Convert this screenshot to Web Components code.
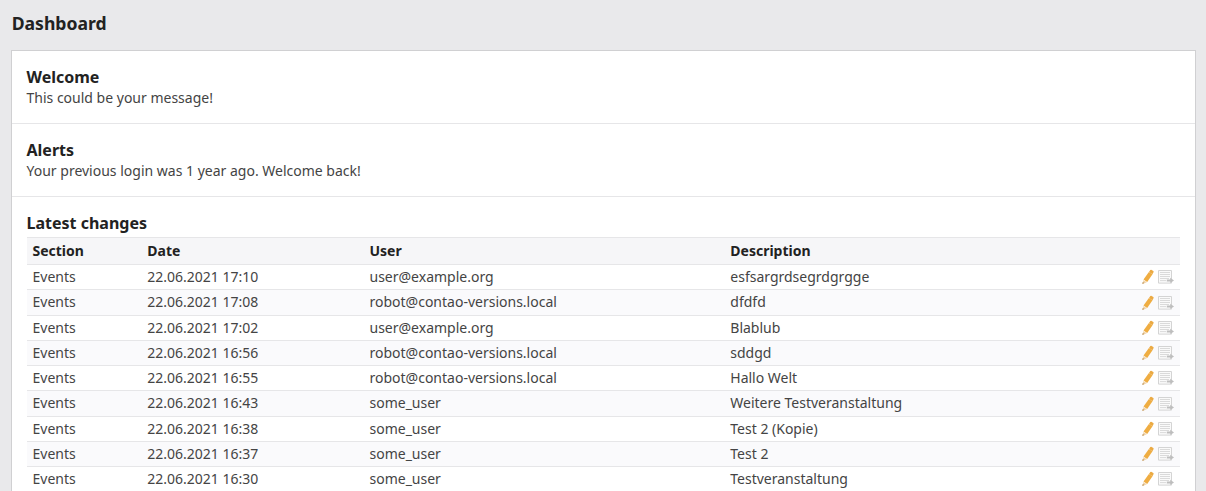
<!DOCTYPE html>
<html lang="en"><head><meta charset="utf-8"><title>Dashboard</title>
<style>
html,body{margin:0;height:100%;overflow:hidden;background:#e9e9eb}
body{font:14px/1.4 "Noto Sans",sans-serif;color:#444}
</style></head><body>
<dash-page heading="Dashboard">
<dash-section heading="Welcome">This could be your message!</dash-section>
<dash-section heading="Alerts">Your previous login was 1 year ago. Welcome back!</dash-section>
<dash-section heading="Latest changes" class="last"><changes-table></changes-table></dash-section>
</dash-page>
<script>
class DashPage extends HTMLElement{
  constructor(){super();this.attachShadow({mode:'open'}).innerHTML=`<style>
  :host{display:flex;flex-direction:column;height:100vh}
  h1{margin:0;padding:11px 11.7px 0;height:39px;flex:none;font-size:17.6px;line-height:24px;font-weight:700;color:#222}
  main{flex:1;min-height:0;overflow:hidden;margin:0 10px 0 11px;border:1px solid #d0d0d2;border-bottom:0;background:#fff}
  </style><h1></h1><main><slot></slot></main>`;
  this.shadowRoot.querySelector('h1').textContent=this.getAttribute('heading');}
}
class DashSection extends HTMLElement{
  constructor(){super();this.attachShadow({mode:'open'}).innerHTML=`<style>
  :host{display:block;box-sizing:border-box;height:73px;padding:15px 15px 0 14.5px;border-bottom:1px solid #e6e6e8}
  :host(.last){height:auto;border:0}
  h2{margin:0;font-size:16px;line-height:22px;font-weight:700;color:#222}
  div{line-height:20px}
  </style><h2></h2><div><slot></slot></div>`;
  this.shadowRoot.querySelector('h2').textContent=this.getAttribute('heading');}
}
class EditIcon extends HTMLElement{
  constructor(){super();this.attachShadow({mode:'open'}).innerHTML=`<style>:host{display:block;width:16px;height:16px}svg{display:block}</style>
  <svg width="16" height="16" viewBox="0 0 16 16"><path d="M8.9 3 12.5 5.3 7.2 13 3.5 10.6Z" fill="#efad42"/><path d="M9 3 10.3 1.1Q10.9 .5 11.7 .9L13.3 2Q13.9 2.6 13.5 3.3L12.4 5.3Z" fill="#ebaa43"/><path d="M3.4 10.9 6.8 13.2 2.5 14.9Z" fill="#f0d3a8"/><path d="M2.7 12.9 4.4 14.1 2.3 15Z" fill="#b98f56"/></svg>`;}
}
class DiffIcon extends HTMLElement{
  constructor(){super();this.attachShadow({mode:'open'}).innerHTML=`<style>:host{display:block;width:16px;height:16px}svg{display:block}</style>
  <svg width="16" height="16" viewBox="0 0 16 16"><path d="M.5 1.5H13.5V14.1H.5Z" fill="#fafafa" stroke="#d4d4d4"/><path d="M2 3.5H12M2 5.5H12M2 7.5H12M2 9.5H11M2 11.6H8" stroke="#dadada"/><path d="M8.8 10.4H12.2V8.7L16 11.4 12.2 14.1V12.4H8.8Z" fill="#bebebe"/></svg>`;}
}
class ChangesTable extends HTMLElement{
  constructor(){super();
  const rows=[['17:10','user@example.org','esfsargrdsegrdgrgge'],['17:08','robot@contao-versions.local','dfdfd'],['17:02','user@example.org','Blablub'],['16:56','robot@contao-versions.local','sddgd'],['16:55','robot@contao-versions.local','Hallo Welt'],['16:43','some_user','Weitere Testveranstaltung'],['16:38','some_user','Test 2 (Kopie)'],['16:37','some_user','Test 2'],['16:30','some_user','Testveranstaltung']];
  this.attachShadow({mode:'open'}).innerHTML=`<style>
  :host{display:block;margin-top:3px;border-top:1px solid #e6e6e8}
  .row{display:grid;grid-template-columns:114.8px 222.2px 360.8px 1fr auto;padding:0 6px 0 6px;height:25.25px;box-sizing:border-box;border-bottom:1px solid #e6e6e8;line-height:24px;white-space:nowrap}
  .head{height:27px;line-height:26px;background:#f6f6f8;color:#222;font-weight:700}
  .alt{background:#fafafc}
  .row:last-child{height:24px;border:0}
  .icons{display:flex;gap:2px;padding-top:4.45px}
  </style><div class="row head"><span>Section</span><span>Date</span><span>User</span><span>Description</span></div>`+
  rows.map((r,i)=>`<div class="row ${i%2?'alt':''}"><span>Events</span><span>22.06.2021 ${r[0]}</span><span>${r[1]}</span><span>${r[2]}</span><span class="icons"><edit-icon></edit-icon><diff-icon></diff-icon></span></div>`).join('');}
}
customElements.define('edit-icon',EditIcon);
customElements.define('diff-icon',DiffIcon);
customElements.define('changes-table',ChangesTable);
customElements.define('dash-section',DashSection);
customElements.define('dash-page',DashPage);
</script></body></html>
